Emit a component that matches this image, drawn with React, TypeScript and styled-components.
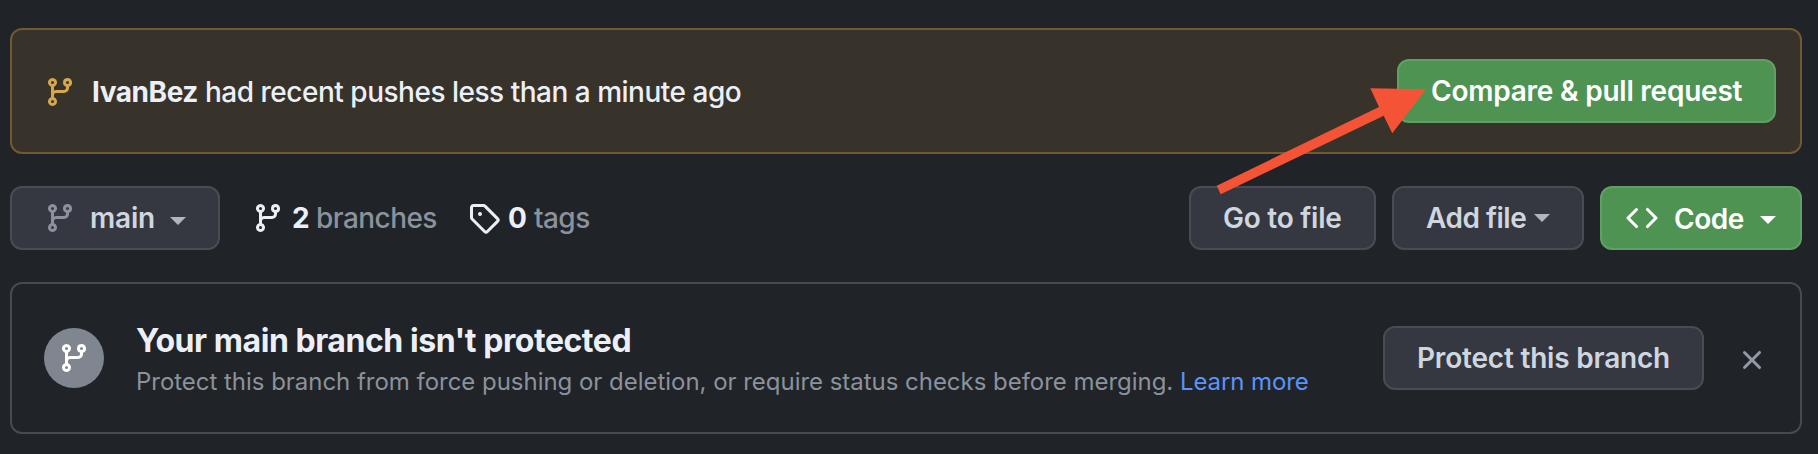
import React from 'react';
import styled, { createGlobalStyle } from 'styled-components';

const GlobalStyle = createGlobalStyle`
  * { box-sizing: border-box; }
  body {
    margin: 0;
    background: #202328;
    color: #ecf0f6;
    font-family: Inter, "Liberation Sans", sans-serif;
    font-size: 28px;
    font-weight: 450;
    line-height: 42px;
    overflow: hidden;
  }
`;

const Page = styled.main`
  position: relative;
  display: flex;
  flex-direction: column;
  gap: 32px;
  width: 1818px;
  height: 454px;
  padding: 28px 16px 0 10px;
`;

const Icon = styled.svg`
  flex: none;
  display: block;
  width: 32px;
  height: 32px;
  fill: currentColor;
  fill-rule: evenodd;
`;

const Banner = styled.section`
  display: flex;
  align-items: center;
  height: 126px;
  padding: 0 24px 0 32px;
  border: 2px solid #72592f;
  border-radius: 12px;
  background: #37332b;

  > ${Icon} { color: #d6a74b; margin-top: 2px; }
`;

const BannerText = styled.p`
  flex: 1;
  display: flex;
  margin: 2px 0 0 16px;
  letter-spacing: -0.49px;
  white-space: pre;
`;

const Author = styled.strong`
  width: 113px;
  font-weight: 650;
  letter-spacing: -0.45px;
`;

const Button = styled.button<{
  $width: number;
  $pad: number;
  $spacing?: number;
  $primary?: boolean;
}>`
  flex: none;
  display: flex;
  align-items: center;
  width: ${(p) => p.$width}px;
  height: 64px;
  padding: 0 0 0 ${(p) => p.$pad}px;
  border: 2px solid ${(p) => (p.$primary ? '#61a064' : '#494c52')};
  border-radius: 12px;
  background: ${(p) => (p.$primary ? '#4f9352' : '#353840')};
  color: ${(p) => (p.$primary ? '#ffffff' : '#cfd6df')};
  font: 570 28px/40px Inter, "Liberation Sans", sans-serif;
  letter-spacing: ${(p) => p.$spacing ?? 0}px;
  text-align: left;
  white-space: nowrap;
`;

const ButtonIcon = styled(Icon)<{ $muted?: boolean }>`
  margin-right: ${(p) => (p.$muted ? 14 : 16)}px;
  color: ${(p) => (p.$muted ? '#8b929c' : 'inherit')};
`;

const ButtonLabel = styled.span<{ $width: number; $drop?: number }>`
  width: ${(p) => p.$width}px;
  padding-top: ${(p) => p.$drop ?? 0}px;
`;

const Caret = styled.span<{ $drop: number; $bright?: boolean }>`
  margin-top: ${(p) => p.$drop}px;
  border: 8px solid transparent;
  border-top-color: ${(p) => (p.$bright ? '#ffffff' : '#b1b6be')};
  border-bottom: 0;
`;

const Toolbar = styled.nav`
  display: flex;
  align-items: center;
  height: 64px;
`;

const Counter = styled.a<{ $gap: number; $spacing: number }>`
  display: flex;
  align-items: center;
  margin-left: ${(p) => p.$gap}px;
  color: #8b929c;
  letter-spacing: ${(p) => p.$spacing}px;

  ${Icon} { color: #ecf0f6; }
`;

const Count = styled.strong<{ $left: number; $width: number }>`
  margin-left: ${(p) => p.$left}px;
  width: ${(p) => p.$width}px;
  color: #ecf0f6;
  font-weight: 650;
`;

const Actions = styled.div`
  display: flex;
  gap: 16px;
  margin-left: auto;
`;

const Panel = styled.section`
  display: flex;
  align-items: flex-start;
  height: 152px;
  border: 2px solid #474b50;
  border-radius: 12px;
`;

const Badge = styled.div`
  display: grid;
  place-items: center;
  width: 60px;
  height: 60px;
  margin: 44px 0 0 32px;
  border-radius: 50%;
  background: #808690;
  color: #ffffff;
`;

const Notice = styled.div`
  flex: 1;
  margin: 37px 0 0 32px;
`;

const Title = styled.h2`
  margin: 0;
  font-size: 32px;
  line-height: 40px;
  font-weight: 650;
  letter-spacing: -0.45px;
`;

const Description = styled.p`
  margin: 0;
  color: #8b929c;
  font-size: 24px;
  font-weight: 400;
  line-height: 42px;
  letter-spacing: -0.03px;
  white-space: nowrap;
`;

const Link = styled.a`
  color: #5b93f8;
  letter-spacing: -0.1px;
`;

const ProtectSlot = styled.div`
  margin-top: 42px;
`;

const Dismiss = styled.button`
  margin: 60px 32px 0;
  padding: 0;
  border: 0;
  background: none;
  color: #9299a3;
`;

const Pointer = styled.svg`
  position: absolute;
  left: 1210px;
  top: 80px;
  width: 224px;
  height: 120px;
  fill: #f45336;
`;

const paths = {
  branch:
    'M11.75 2.5a.75.75 0 100 1.5.75.75 0 000-1.5zm-2.25.75a2.25 2.25 0 113 2.122V6A2.5 2.5 0 0110 8.5H6a1 1 0 00-1 1v1.128a2.251 2.251 0 11-1.5 0V5.372a2.25 2.25 0 111.5 0v1.836A2.492 2.492 0 016 7h4a1 1 0 001-1v-.628A2.25 2.25 0 019.5 3.25zM4.25 12a.75.75 0 100 1.5.75.75 0 000-1.5zM3.5 3.25a.75.75 0 111.5 0 .75.75 0 01-1.5 0z',
  tag: 'M2.5 7.775V2.75a.25.25 0 01.25-.25h5.025a.25.25 0 01.177.073l6.25 6.25a.25.25 0 010 .354l-5.025 5.025a.25.25 0 01-.354 0l-6.25-6.25a.25.25 0 01-.073-.177zm-1.5 0V2.75C1 1.784 1.784 1 2.75 1h5.025c.464 0 .91.184 1.238.513l6.25 6.25a1.75 1.75 0 010 2.474l-5.026 5.026a1.75 1.75 0 01-2.474 0l-6.25-6.25A1.75 1.75 0 011 7.775zM6 5a1 1 0 100 2 1 1 0 000-2z',
  code: 'M4.72 3.22a.75.75 0 011.06 1.06L2.06 8l3.72 3.72a.75.75 0 11-1.06 1.06L.47 8.53a.75.75 0 010-1.06l4.25-4.25zm6.56 0a.75.75 0 10-1.06 1.06L13.94 8l-3.72 3.72a.75.75 0 101.06 1.06l4.25-4.25a.75.75 0 000-1.06l-4.25-4.25z',
  x: 'M3.72 3.72a.75.75 0 011.06 0L8 6.94l3.22-3.22a.75.75 0 111.06 1.06L9.06 8l3.22 3.22a.75.75 0 11-1.06 1.06L8 9.06l-3.22 3.22a.75.75 0 01-1.06-1.06L6.94 8 3.72 4.78a.75.75 0 010-1.06z',
};

export default function App() {
  return (
    <>
      <GlobalStyle />
      <Page>
        <Banner>
          <Icon viewBox="0 0 16 16"><path d={paths.branch} /></Icon>
          <BannerText>
            <Author>IvanBez</Author>
            <span>had recent pushes less than a minute ago</span>
          </BannerText>
          <Button $primary $width={379} $pad={32} $spacing={-0.23}>
            Compare &amp; pull request
          </Button>
        </Banner>

        <Toolbar>
          <Button $width={210} $pad={32} $spacing={-0.2}>
            <ButtonIcon $muted viewBox="0 0 16 16"><path d={paths.branch} /></ButtonIcon>
            <ButtonLabel $width={80}>main</ButtonLabel>
            <Caret $drop={6} />
          </Button>
          <Counter $gap={32} $spacing={-0.55}>
            <Icon viewBox="0 0 16 16"><path d={paths.branch} /></Icon>
            <Count $left={8} $width={24}>2</Count>
            <span>branches</span>
          </Counter>
          <Counter $gap={31} $spacing={-0.55}>
            <Icon viewBox="0 0 16 16"><path d={paths.tag} /></Icon>
            <Count $left={8} $width={26}>0</Count>
            <span>tags</span>
          </Counter>
          <Actions>
            <Button $width={187} $pad={32} $spacing={-0.25}>Go to file</Button>
            <Button $width={192} $pad={32} $spacing={-0.5}>
              <ButtonLabel $width={108}>Add file</ButtonLabel>
              <Caret $drop={0} />
            </Button>
            <Button $primary $width={202} $pad={24} $spacing={-0.5}>
              <ButtonIcon viewBox="0 0 16 16"><path d={paths.code} /></ButtonIcon>
              <ButtonLabel $width={86} $drop={2}>Code</ButtonLabel>
              <Caret $bright $drop={4} />
            </Button>
          </Actions>
        </Toolbar>

        <Panel>
          <Badge>
            <Icon viewBox="0 0 16 16"><path d={paths.branch} /></Icon>
          </Badge>
          <Notice>
            <Title>Your main branch isn't protected</Title>
            <Description>
              Protect this branch from force pushing or deletion, or require status checks before
              merging. <Link>Learn more</Link>
            </Description>
          </Notice>
          <ProtectSlot>
            <Button $width={321} $pad={32} $spacing={-0.2}>Protect this branch</Button>
          </ProtectSlot>
          <Dismiss aria-label="Dismiss">
            <Icon viewBox="0 0 16 16"><path d={paths.x} /></Icon>
          </Dismiss>
        </Panel>

        <Pointer viewBox="1210 80 224 120">
          <path d="M1216.7 185.7L1379 107L1370.3 88.3L1426 89.3L1392.3 133.3L1383.7 115.7L1220.7 194.3Z" />
        </Pointer>
      </Page>
    </>
  );
}
